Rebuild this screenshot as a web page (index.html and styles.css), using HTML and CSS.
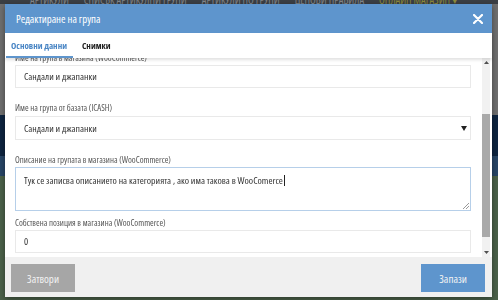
FILE: index.html
```html
<!DOCTYPE html>
<html lang="bg">
  <head>
    <meta charset="UTF-8" />
    <meta name="viewport" content="width=device-width, initial-scale=1.0" />
    <title>Редактиране на група</title>
    <link rel="stylesheet" href="styles.css">
  </head>
  <body>
    <!-- page behind the dialog (dimmed) -->
    <div class="page">
      <nav class="topnav">
        <span>Артикули</span>
        <span>Списък артикулни групи</span>
        <span>Артикули по групи</span>
        <span>Ценови правила</span>
        <span class="active">Онлайн магазин ▾</span>
      </nav>
      <div class="band band-gray"></div>
      <div class="band band-navy"></div>
      <div class="band band-blue"></div>
      <div class="band band-green"></div>
    </div>

    <div class="overlay">
      <div class="modal">
        <div class="modal-header">
          <h4>Редактиране на група</h4>
          <svg class="close" width="10" height="10" viewBox="0 0 10 10">
            <path d="M1 1 L9 9 M9 1 L1 9" stroke="#fff" stroke-width="2.2" stroke-linecap="round" />
          </svg>
        </div>

        <div class="tabs">
          <span class="tab active">Основни данни</span>
          <span class="tab">Снимки</span>
        </div>

        <div class="modal-body">
          <div class="form">
            <div class="group">
              <label>Име на група в магазина (WooCommerce)</label>
              <div class="field">Сандали и джапанки</div>
            </div>
            <div class="group">
              <label>Име на група от базата (ICASH)</label>
              <div class="field select">
                Сандали и джапанки
                <svg width="6" height="5" viewBox="0 0 6 5"><path d="M0 0 H6 L3 5 Z" fill="#222" /></svg>
              </div>
            </div>
            <div class="group group-tight">
              <label>Описание на групата в магазина (WooCommerce)</label>
              <div class="field textarea">
                <span>Тук се записва описанието на категорията , ако има такова в WooComerce<span class="caret"></span></span>
                <svg class="grip" width="7" height="7" viewBox="0 0 7 7">
                  <path d="M1 7 L7 1 M4 7 L7 4" stroke="#9a9a9a" stroke-width="1" />
                </svg>
              </div>
            </div>
            <div class="group">
              <label>Собствена позиция в магазина (WooCommerce)</label>
              <div class="field">0</div>
            </div>
          </div>

          <div class="scrollbar">
            <div class="sb-btn"><svg width="5" height="3" viewBox="0 0 5 3"><path d="M0 3 L2.5 0 L5 3 Z" fill="#505050" /></svg></div>
            <div class="sb-space-top"></div>
            <div class="sb-thumb"></div>
            <div class="sb-space-bottom"></div>
            <div class="sb-btn"><svg width="5" height="3" viewBox="0 0 5 3"><path d="M0 0 L5 0 L2.5 3 Z" fill="#505050" /></svg></div>
          </div>
        </div>

        <div class="modal-footer">
          <button class="btn btn-close">Затвори</button>
          <button class="btn btn-save">Запази</button>
        </div>
      </div>
    </div>
  </body>
</html>
```

FILE: styles.css
```css
body {
  margin: 0;
  font-family: "Open Sans", "Liberation Sans Narrow", "Liberation Sans", sans-serif;
  font-stretch: 75%;
  overflow: hidden;
  height: 300px;
}

/* background page, already dimmed */
.page {
  display: flex;
  flex-direction: column;
  height: 300px;
}
.topnav {
  height: 4px;
  background: #3b3f44;
  display: flex;
  align-items: flex-end;
  gap: 15px;
  padding-left: 30px;
  overflow: hidden;
  font-size: 10.5px;
  line-height: 8px;
  text-transform: uppercase;
  color: #83878b;
  white-space: nowrap;
}
.topnav .active {
  color: #8c8a3c;
}
.band-gray {
  height: 111px;
  background: #6f6f6f;
}
.band-navy {
  height: 41px;
  background: #0e2440;
}
.band-blue {
  height: 20px;
  background: #284566;
}
.band-green {
  flex: 1;
  background: #4b6149;
}

/* dialog */
.overlay {
  position: fixed;
  inset: 0;
  padding: 4px 6px 3px 5px;
}
.modal {
  height: 293px;
  background: #fff;
  display: flex;
  flex-direction: column;
  box-shadow: 0 2px 6px rgba(0, 0, 0, 0.4);
}
.modal-header {
  height: 29px;
  background: #5e95cd;
  display: flex;
  align-items: center;
  justify-content: space-between;
  padding: 0 9px 0 11px;
}
.modal-header h4 {
  margin: 0;
  font-size: 10.8px;
  font-weight: normal;
  color: #fff;
}
.close {
  margin-top: 1px;
}

.tabs {
  height: 25px;
  display: flex;
  align-items: stretch;
  padding-left: 1px;
  background: #fff;
  box-shadow: 0 2px 3px rgba(0, 0, 0, 0.12);
  position: relative;
  z-index: 1;
}
.tab {
  display: flex;
  align-items: center;
  padding: 2px 6px 0 5px;
  margin-right: 4px;
  font-size: 9px;
  font-weight: bold;
  color: #222;
  border-bottom: 2px solid transparent;
}
.tab.active {
  color: #4a86c5;
  border-bottom-color: #5e95cd;
}

.modal-body {
  height: 199px;
  display: flex;
}
.form {
  flex: 1;
  overflow: hidden;
  padding: 0 11px 0 10px;
}
.form .group:first-child {
  margin-top: -7px;
}
.group {
  margin-bottom: 13px;
}
.group-tight {
  margin-bottom: 5px;
}
.group label {
  display: block;
  height: 14px;
  line-height: 14px;
  font-size: 8.8px;
  color: #555;
  white-space: nowrap;
}
.field {
  height: 23px;
  box-sizing: border-box;
  border: 1px solid #e9e9e9;
  padding: 0 8px;
  display: flex;
  align-items: center;
  font-size: 9.8px;
  color: #333;
}
.select {
  height: 24px;
  margin-top: 1px;
  justify-content: space-between;
  padding-right: 3px;
}
.textarea {
  height: 44px;
  align-items: flex-start;
  padding-top: 6px;
  border-color: #b6cfe9;
  position: relative;
}
.caret {
  display: inline-block;
  width: 1px;
  height: 11px;
  background: #222;
  margin-left: 1px;
  vertical-align: -2px;
}
.grip {
  position: absolute;
  right: 1px;
  bottom: 1px;
}

.scrollbar {
  width: 8px;
  margin-right: 2px;
  background: #f1f1f1;
  display: flex;
  flex-direction: column;
}
.sb-btn {
  height: 9px;
  display: flex;
  align-items: center;
  justify-content: center;
}
.sb-space-top {
  height: 47px;
}
.sb-thumb {
  height: 123px;
  background: #a9a9a9;
}
.sb-space-bottom {
  height: 11px;
}

.modal-footer {
  flex: 1;
  background: #f0f0f0;
  display: flex;
  justify-content: space-between;
  align-items: flex-start;
  padding: 7px 7px 0 6px;
}
.btn {
  width: 64px;
  height: 28px;
  border: none;
  color: #f2f2f2;
  font-family: inherit;
  font-stretch: inherit;
  font-size: 11px;
  cursor: pointer;
}
.btn-close {
  background: #a6a6a6;
}
.btn-save {
  background: #5e95cd;
}
```
